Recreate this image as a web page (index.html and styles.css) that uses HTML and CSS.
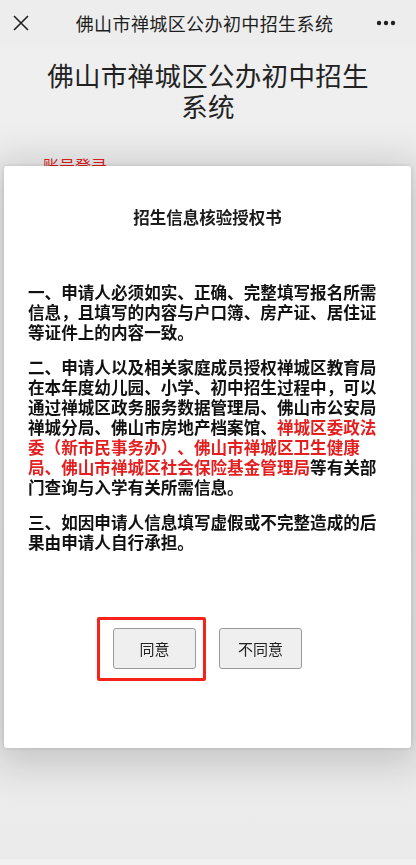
FILE: index.html
```html
<!DOCTYPE html>
<html lang="zh-CN">
<head>
    <meta charset="UTF-8">
    <meta name="viewport" content="width=device-width, initial-scale=1.0">
    <title>佛山市禅城区公办初中招生系统</title>
    <link rel="stylesheet" href="styles.css">
</head>
<body>

<!-- 顶部导航 -->
<div class="navbar">
    <span class="nav-close">
        <svg width="16" height="16" viewBox="0 0 16 16"><path d="M1 1L15 15M15 1L1 15" stroke="#222" stroke-width="1.6" fill="none"/></svg>
    </span>
    <span class="nav-title">佛山市禅城区公办初中招生系统</span>
    <span class="nav-more">
        <svg width="20" height="6" viewBox="0 0 20 6"><circle cx="3" cy="3" r="2.2" fill="#222"/><circle cx="10" cy="3" r="2.2" fill="#222"/><circle cx="17" cy="3" r="2.2" fill="#222"/></svg>
    </span>
</div>

<div class="page">
    <h1 class="page-title">佛山市禅城区公办初中招生<br>系统</h1>
    <div class="login-tab">账号登录</div>
</div>

<!-- 授权书弹窗 -->
<div class="modal">
    <h2 class="modal-title">招生信息核验授权书</h2>
    <p>一、申请人必须如实、正确、完整填写报名所需信息，且填写的内容与户口簿、房产证、居住证等证件上的内容一致。</p>
    <p>二、申请人以及相关家庭成员授权禅城区教育局在本年度幼儿园、小学、初中招生过程中，可以通过禅城区政务服务数据管理局、佛山市公安局禅城分局、佛山市房地产档案馆、<span class="red">禅城区委政法委（新市民事务办）、佛山市禅城区卫生健康局、佛山市禅城区社会保险基金管理局</span>等有关部门查询与入学有关所需信息。</p>
    <p>三、如因申请人信息填写虚假或不完整造成的后果由申请人自行承担。</p>
    <div class="modal-buttons">
        <span class="marked"><button class="btn">同意</button></span>
        <button class="btn">不同意</button>
    </div>
</div>

</body>
</html>
```

FILE: styles.css
```css
html, body { margin: 0; padding: 0; }
body { font-family: "Noto Sans CJK SC", "Noto Sans", sans-serif; background: #f1f1f1; height: 865px; overflow: hidden; color: #1c1c1c; text-spacing-trim: space-all; }

.navbar { height: 46px; background: #ededed; display: grid; grid-template-columns: 1fr auto 1fr; align-items: center; padding: 0 20px 0 13px; }
.nav-close { width: 16px; height: 16px; display: flex; }
.nav-title { font-size: 18px; color: #1e1e1e; letter-spacing: 0.4px; }
.nav-more { width: 20px; display: flex; justify-self: end; }

.page { background: linear-gradient(#efefef, #ebebeb); padding-top: 13px; height: 800px; }
.page-title { margin: 0; text-align: center; font-size: 26.5px; font-weight: normal; line-height: 31px; color: #222; letter-spacing: 0.3px; }
.login-tab { margin: 33px 0 0 43px; color: #e0221e; font-size: 16px; line-height: 22px; }

.modal { position: fixed; top: 166px; left: 4px; width: 407px; height: 582px; box-sizing: border-box; background: #fff; border-radius: 3px; padding: 39px 24px 0; box-shadow: 0 0 4px rgba(0,0,0,0.14), 0 6px 40px 10px rgba(0,0,0,0.17); }
.modal-title { margin: 0 0 53px; text-align: center; font-size: 16.5px; line-height: 24px; font-weight: bold; }
.modal p { margin: 0 0 15px; font-size: 16.6px; line-height: 20px; font-weight: bold; color: #111; }
.modal .red { color: #e41f1f; }

.modal-buttons { display: flex; justify-content: center; gap: 23px; margin-top: 76px; }
.btn { width: 83px; height: 41px; background: #efefef; border: 1px solid #9a9a9a; border-radius: 3px; font-family: inherit; font-size: 15px; color: #222; padding: 0; }
.marked { position: relative; display: flex; }
.marked::after { content: ""; position: absolute; left: -16px; right: -10px; top: -11px; bottom: -12px; border: 3px solid #f5231b; border-radius: 2px; }
```
